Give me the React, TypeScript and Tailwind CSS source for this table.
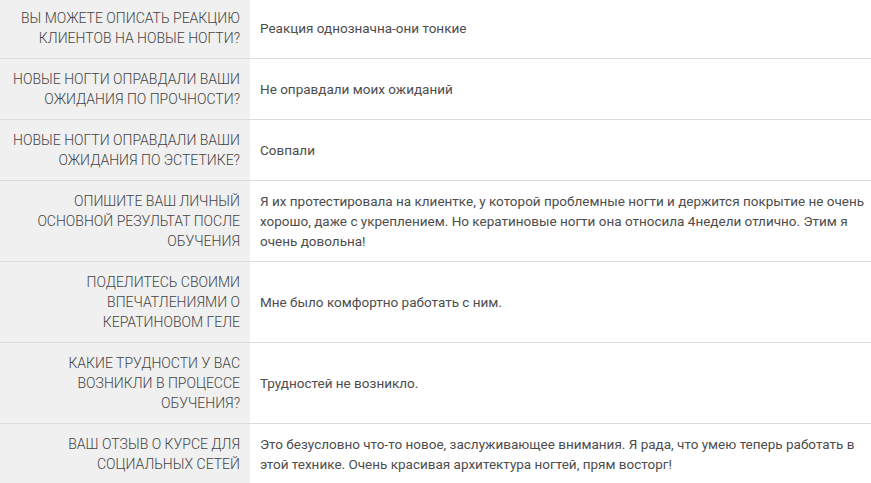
import React from "react";

const rows: [string[], string[]][] = [
  [["ВЫ МОЖЕТЕ ОПИСАТЬ РЕАКЦИЮ", "КЛИЕНТОВ НА НОВЫЕ НОГТИ?"], ["Реакция однозначна-они тонкие"]],
  [["НОВЫЕ НОГТИ ОПРАВДАЛИ ВАШИ", "ОЖИДАНИЯ ПО ПРОЧНОСТИ?"], ["Не оправдали моих ожиданий"]],
  [["НОВЫЕ НОГТИ ОПРАВДАЛИ ВАШИ", "ОЖИДАНИЯ ПО ЭСТЕТИКЕ?"], ["Совпали"]],
  [
    ["ОПИШИТЕ ВАШ ЛИЧНЫЙ", "ОСНОВНОЙ РЕЗУЛЬТАТ ПОСЛЕ", "ОБУЧЕНИЯ"],
    [
      "Я их протестировала на клиентке, у которой проблемные ногти и держится покрытие не очень",
      "хорошо, даже с укреплением. Но кератиновые ногти она относила 4недели отлично. Этим я",
      "очень довольна!",
    ],
  ],
  [["ПОДЕЛИТЕСЬ СВОИМИ", "ВПЕЧАТЛЕНИЯМИ О", "КЕРАТИНОВОМ ГЕЛЕ"], ["Мне было комфортно работать с ним."]],
  [["КАКИЕ ТРУДНОСТИ У ВАС", "ВОЗНИКЛИ В ПРОЦЕССЕ", "ОБУЧЕНИЯ?"], ["Трудностей не возникло."]],
  [
    ["ВАШ ОТЗЫВ О КУРСЕ ДЛЯ", "СОЦИАЛЬНЫХ СЕТЕЙ"],
    [
      "Это безусловно что-то новое, заслуживающее внимания. Я рада, что умею теперь работать в",
      "этой технике. Очень красивая архитектура ногтей, прям восторг!",
    ],
  ],
];

export default function App() {
  return (
    <div
      className="w-[871px] h-[483px] overflow-hidden bg-white leading-[20px]"
      style={{ fontFamily: "Roboto, 'Open Sans', sans-serif" }}
    >
      <div className="-mt-[2px] flex flex-col">
        {rows.map(([q, a], i) => (
          <div key={i} className={`flex ${i < rows.length - 1 ? "border-b border-[#dcdcdc]" : ""}`}>
            <div className="w-[250px] shrink-0 bg-[#f0f0f0] py-[10px] pr-[10px] text-right text-[14px] font-light text-[#444444]">
              {q.map((l, j) => (
                <div key={j} className="whitespace-nowrap">{l}</div>
              ))}
            </div>
            <div className="flex flex-1 flex-col justify-center py-[10px] pl-[10px] text-[13.5px] text-[#4d4d4d]">
              {a.map((l, j) => (
                <div key={j} className="whitespace-nowrap">{l}</div>
              ))}
            </div>
          </div>
        ))}
      </div>
    </div>
  );
}
